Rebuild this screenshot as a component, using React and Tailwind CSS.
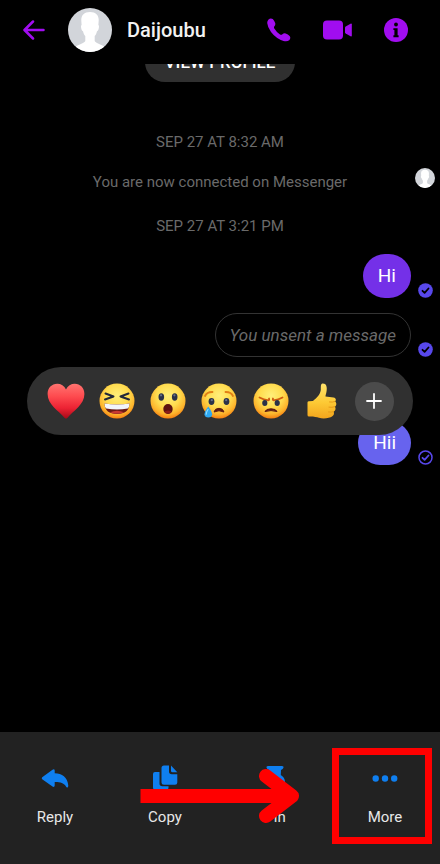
import React from 'react';

const Avatar = ({ className }) => (
  <svg viewBox="0 0 44 44" className={className} role="img" aria-label="Daijoubu">
    <clipPath id="avatar-clip">
      <circle cx="22" cy="22" r="22" />
    </clipPath>
    <g clipPath="url(#avatar-clip)">
      <rect width="44" height="44" fill="#d2d5da" />
      <path
        fill="#fff"
        d="M22 4C16 4 13 7.500 13.300 12.500L13.600 17C12.800 17.300 12.900 19 13.400 21C13.800 22.600 14.300 23 15 23.200C15.500 25.500 16.300 27 17.300 28V33C16.500 35 10 36.500 6.500 39.500V46H37.500V39.500C34 36.500 27.500 35 26.700 33V28C27.700 27 28.500 25.500 29 23.200C29.700 23 30.200 22.600 30.600 21C31.100 19 31.200 17.300 30.400 17L30.700 12.500C31 7.500 28 4 22 4Z"
      />
    </g>
  </svg>
);

const BackIcon = () => (
  <svg viewBox="0 0 22 20" className="w-[22px] h-5" fill="none" stroke="#a10df0" strokeWidth="2.5" strokeLinecap="round" strokeLinejoin="round">
    <path d="M10 1.500L1.500 10L10 18.500M2 10H20.500" />
  </svg>
);

const CallIcon = () => (
  <svg viewBox="0 0 24 24" className="w-6 h-6" fill="#a10df0">
    <path d="M1.300 1.800Q3.500-.5 5.800 1Q7.500 3 8.200 5Q8.700 6.800 7.400 8.300Q6.600 9.400 7.300 10.600Q9.500 14.300 13 16.400Q14.300 17.100 15.400 16.200Q17 14.900 18.700 15.500Q21 16.400 22.600 18Q24.200 20 22.200 22.200Q20.200 24 16.500 23Q9 20.500 4 14Q.5 9 .2 5Q.2 3 1.300 1.800Z" />
  </svg>
);

const VideoIcon = () => (
  <svg viewBox="0 0 29 24" className="w-[29px] h-6" fill="#a10df0">
    <rect x="0" y="2.500" width="20" height="19" rx="4" />
    <path d="M22 9.500Q22 8.800 22.700 8.400L27.500 5.700Q28.800 5.200 28.800 6.300V17.700Q28.800 18.800 27.500 18.300L22.700 15.600Q22 15.200 22 14.500Z" />
  </svg>
);

const InfoIcon = () => (
  <svg viewBox="0 0 24 24" className="w-6 h-6">
    <circle cx="12" cy="12" r="12" fill="#a10df0" />
    <circle cx="12" cy="6.500" r="1.900" fill="#000" />
    <path d="M10 10.200H13.600V17.300H14.600V19.300H9.400V17.300H10.400V12H9.400V10.200Z" fill="#000" />
  </svg>
);

const SeenIcon = ({ filled }) => (
  <svg viewBox="0 0 15 15" className="w-[15px] h-[15px] shrink-0" fill="none" strokeLinecap="round" strokeLinejoin="round">
    {filled ? (
      <circle cx="7.500" cy="7.500" r="7.300" fill="#5848ec" />
    ) : (
      <circle cx="7.500" cy="7.500" r="6.500" stroke="#5848ec" strokeWidth="1.500" />
    )}
    <path d="M4.500 7.800L6.600 9.800L10.500 5.500" stroke={filled ? '#000' : '#5848ec'} strokeWidth="1.800" />
  </svg>
);

const Heart = () => (
  <svg viewBox="0 0 36 36" className="w-9 h-9 overflow-visible">
    <defs>
      <linearGradient id="heart" x1="0" y1="0" x2="0" y2="1">
        <stop offset="0" stopColor="#ff7470" />
        <stop offset=".35" stopColor="#fe4c50" />
        <stop offset=".7" stopColor="#ec2233" />
        <stop offset="1" stopColor="#a50a18" />
      </linearGradient>
    </defs>
    <path
      fill="url(#heart)"
      d="M18 6.500C16.300 2.800 13 .8 9.200 .8C3.800 .8 -.4 5 -.4 11C-.4 21.500 10.500 27.500 16.700 35Q18 36.200 19.300 35C25.500 27.500 36.400 21.500 36.400 11C36.400 5 32.200 .8 26.800 .8C23 .8 19.700 2.800 18 6.500Z"
    />
  </svg>
);

const Face = ({ children }) => (
  <svg viewBox="0 0 36 36" className="w-9 h-9">
    <defs>
      <radialGradient id="face" cx=".5" cy=".35" r=".66">
        <stop offset="0" stopColor="#ffef7a" />
        <stop offset=".5" stopColor="#ffdc4f" />
        <stop offset=".8" stopColor="#fdb42c" />
        <stop offset="1" stopColor="#f5790f" />
      </radialGradient>
    </defs>
    <circle cx="18" cy="18" r="17.500" fill="url(#face)" />
    {children}
  </svg>
);

const Laugh = () => (
  <Face>
    <g fill="none" stroke="#22283a" strokeWidth="2" strokeLinecap="round" strokeLinejoin="round">
      <path d="M6.500 10.500L14.500 13.500L6 16.500" />
      <path d="M29.500 10.500L21.500 13.500L30 16.500" />
    </g>
    <path d="M5.500 20.500Q18 22.500 30.500 20.500Q30 31 18 31Q6 31 5.500 20.500Z" fill="#6b1a16" />
    <path d="M5.500 20.500Q18 22.500 30.500 20.500Q30.300 24.500 28.800 25.500Q18 27.500 7.200 25.500Q5.700 24.500 5.500 20.500Z" fill="#f2f5fb" />
    <path d="M11 29.200Q18 26.200 25 29.200Q18 32.500 11 29.200Z" fill="#c93a32" />
  </Face>
);

const Wow = () => (
  <Face>
    <ellipse cx="11.300" cy="14" rx="2.800" ry="3.700" fill="#2b3248" />
    <ellipse cx="24.700" cy="14" rx="2.800" ry="3.700" fill="#2b3248" />
    <circle cx="11" cy="12.300" r="1.100" fill="#66708c" />
    <circle cx="24.400" cy="12.300" r="1.100" fill="#66708c" />
    <ellipse cx="18" cy="26" rx="4.700" ry="5" fill="#5d1210" />
    <ellipse cx="18" cy="29" rx="3.200" ry="1.500" fill="#8a1d18" />
  </Face>
);

const Sad = () => (
  <Face>
    <path d="M4 13Q6 8.800 11.500 9M24.500 9Q30 8.800 32 13" fill="none" stroke="#e28016" strokeWidth="1.800" strokeLinecap="round" />
    <ellipse cx="10.500" cy="18.500" rx="2.900" ry="3.400" fill="#2b3248" />
    <ellipse cx="25.500" cy="18.500" rx="2.900" ry="3.400" fill="#2b3248" />
    <circle cx="10.800" cy="17.200" r="1.100" fill="#66708c" />
    <circle cx="25.200" cy="17.200" r="1.100" fill="#66708c" />
    <path d="M13 29Q14 25.300 18 25.300Q22 25.300 23 29Q18 26.500 13 29Z" fill="#5d1a12" stroke="#5d1a12" strokeLinejoin="round" />
    <path d="M7.300 23.500Q3.500 28.500 3.500 31.200Q3.700 34.500 7.300 34.500Q11 34.500 11.100 31.200Q11 28.500 7.300 23.500Z" fill="#2ea8f2" />
    <path d="M7 26.500Q5 29.500 5.200 31.200" fill="none" stroke="#8fdcff" strokeWidth="1.200" strokeLinecap="round" />
  </Face>
);

const Angry = () => (
  <Face>
    <path d="M6.500 14.500Q10.500 16.800 15.500 17.300Q16.500 17.200 16 15.500M29.500 14.500Q25.500 16.800 20.500 17.300Q19.500 17.200 20 15.500" fill="none" stroke="#cf5c10" strokeWidth="1.800" strokeLinecap="round" />
    <ellipse cx="11.800" cy="20" rx="2.600" ry="2.900" fill="#2b3248" />
    <ellipse cx="24.200" cy="20" rx="2.600" ry="2.900" fill="#2b3248" />
    <path d="M12 28.500Q13 25.800 18 25.800Q23 25.800 24 28.500Q18 26.700 12 28.500Z" fill="#5d1a12" stroke="#5d1a12" strokeLinejoin="round" />
  </Face>
);

const Like = () => (
  <svg viewBox="0 0 36 36" className="w-9 h-9">
    <defs>
      <linearGradient id="like" x1="0" y1="0" x2="0" y2="1">
        <stop offset="0" stopColor="#ffe36b" />
        <stop offset=".55" stopColor="#fdc934" />
        <stop offset="1" stopColor="#f3a51d" />
      </linearGradient>
    </defs>
    <path
      fill="url(#like)"
      d="M3.500 19.500Q3.500 18.200 5 18.200L9 18C12.500 15 16 12 16.800 7C17 4 16.300 .8 18.600 .5C22.300 .3 23.300 4 22.600 8C22.300 10.500 21.500 12 21.500 13.500C24 14.200 27 13.800 29.500 14.500C32.500 15.300 32.300 17.600 31 18.500C33 19.800 32.600 22.700 30.800 23.700C32.200 25.200 31.500 28 29.600 28.600C30.500 30.700 29.800 32.500 28 33.600C26 35.200 19 36 15 34.800C12.500 34 10 33.400 5 33.500Q3.500 33.500 3.500 32Z"
    />
    <path d="M31 18.500Q28.500 19.500 25.500 19M30.800 23.700Q28 24.700 25 24.200M29.600 28.600Q27.500 29.400 24.500 29" fill="none" stroke="#e79a17" strokeLinecap="round" />
  </svg>
);

const ReplyIcon = () => (
  <svg viewBox="0 0 28 28" className="w-7 h-7" fill="#0f7ff0">
    <path d="M1.200 13.300L11.500 5.700Q13.500 4.500 13.700 6.500V9.300C21 9.500 26.500 13 27.300 21.500Q27.200 24.800 25.300 22.900C23 18.900 19 17.900 13.700 18V21.500Q13.500 23.700 11.500 22.500L1.200 15.300Q.2 14.300 1.200 13.300Z" />
  </svg>
);

const CopyIcon = () => (
  <svg viewBox="0 0 28 28" className="w-7 h-7" fill="#0f7ff0">
    <path d="M4 8H8.500V19.500Q8.500 22.300 11.300 22.300H17.500V23.500Q17.500 26 15 26H4.500Q2 26 2 23.500V10Q2 8 4 8Z" />
    <path d="M13 1.500H18V7.500Q18 10.300 20.800 10.300H26.300V18.500Q26.300 20.800 24 20.800H13Q10.500 20.800 10.500 18.500V4Q10.500 1.500 13 1.500Z" />
    <path d="M20 1.500L26.300 8.300H21.500Q20 8.300 20 6.800Z" />
  </svg>
);

const PinIcon = () => (
  <svg viewBox="0 0 28 28" className="w-7 h-7" fill="#0f7ff0">
    <path d="M7 2H21Q23 2 22.500 3.800Q22 5 20 6L19.800 11Q24 13.500 24 18H15.300V25L14 27L12.700 25V18H4Q4 13.500 8.200 11L8 6Q6 5 5.500 3.800Q5 2 7 2Z" />
  </svg>
);

const MoreIcon = () => (
  <svg viewBox="0 0 28 28" className="w-7 h-7" fill="#0f7ff0">
    <circle cx="4.700" cy="14.500" r="3.200" />
    <circle cx="14" cy="14.500" r="3.200" />
    <circle cx="23.200" cy="14.500" r="3.200" />
  </svg>
);

const reactions = [
  { name: 'Love', Icon: Heart },
  { name: 'Haha', Icon: Laugh },
  { name: 'Wow', Icon: Wow },
  { name: 'Sad', Icon: Sad },
  { name: 'Angry', Icon: Angry },
  { name: 'Like', Icon: Like },
];

const actions = [
  { label: 'Reply', Icon: ReplyIcon },
  { label: 'Copy', Icon: CopyIcon },
  { label: 'Pin', Icon: PinIcon },
  { label: 'More', Icon: MoreIcon },
];

const Header = () => (
  <header className="flex items-center pl-[23px] pr-8 pt-2 pb-3">
    <button aria-label="Back">
      <BackIcon />
    </button>
    <Avatar className="w-11 h-11 ml-[23px]" />
    <h1 className="ml-[15px] text-[20px] leading-6 font-medium text-[#f2f2f2]">Daijoubu</h1>
    <div className="ml-auto flex items-center gap-8">
      <button aria-label="Call">
        <CallIcon />
      </button>
      <button aria-label="Video call">
        <VideoIcon />
      </button>
      <button aria-label="Info">
        <InfoIcon />
      </button>
    </div>
  </header>
);

const ReactionBar = () => (
  <div className="absolute inset-x-[27px] bottom-[30px] h-[68px] rounded-full bg-[#303030] flex items-center justify-between pl-[21px] pr-[19px]">
    {reactions.map(({ name, Icon }) => (
      <button key={name} aria-label={name}>
        <Icon />
      </button>
    ))}
    <button aria-label="More reactions" className="w-[39px] h-[39px] rounded-full bg-[#4b4b4b] flex items-center justify-center">
      <svg viewBox="0 0 16 16" className="w-4 h-4" stroke="#fff" strokeWidth="1.800" strokeLinecap="round">
        <path d="M8 1V15M1 8H15" />
      </svg>
    </button>
  </div>
);

const App = () => {
  return (
    <div className="min-h-screen flex flex-col bg-black font-['Roboto',sans-serif]">
      <Header />

      <main className="flex-1 overflow-hidden text-[#6a6a6a] text-[15px] leading-5">
        <div className="flex justify-center">
          <button className="-mt-[22px] h-10 px-5 rounded-full bg-[#303030] text-white text-[17px] font-medium">
            VIEW PROFILE
          </button>
        </div>

        <p className="mt-[50px] text-center">SEP 27 AT 8:32 AM</p>
        <div className="mt-4 h-6 px-[5px] flex">
          <p className="flex-1 self-end pl-5 text-center">You are now connected on Messenger</p>
          <Avatar className="w-5 h-5" />
        </div>
        <p className="mt-6 text-center">SEP 27 AT 3:21 PM</p>

        <div className="mt-[18px] pr-[7px] flex items-end justify-end gap-[7px]">
          <p className="h-11 px-[15px] flex items-center rounded-full bg-[#7430e8] text-white text-[19px]">Hi</p>
          <SeenIcon filled />
        </div>
        <div className="mt-[15px] pr-[7px] flex items-end justify-end gap-[7px]">
          <p className="h-11 px-[14px] flex items-center rounded-full border border-[#333] italic text-[17px]">
            You unsent a message
          </p>
          <SeenIcon filled />
        </div>
        <div className="relative mt-16 pr-[7px] flex items-end justify-end gap-[7px]">
          <p className="h-11 px-[15px] flex items-center rounded-full bg-[#6763ee] text-white text-[19px]">Hii</p>
          <SeenIcon />
          <ReactionBar />
        </div>
      </main>

      <footer className="relative bg-[#222]">
        <nav className="grid grid-cols-4 pt-8 pb-[37px]">
          {actions.map(({ label, Icon }) => (
            <button key={label} className="flex flex-col items-center gap-[15px] text-[15px] leading-5 text-[#e8e8e8]">
              <Icon />
              {label}
            </button>
          ))}
        </nav>

        {/* callout pointing at the More action */}
        <svg viewBox="0 0 160 56" className="absolute left-[140px] top-9 w-40 h-14 pointer-events-none" fill="none" stroke="#f00">
          <path d="M.5 28H150" strokeWidth="14" />
          <path d="M126 8L152 28L126 48" strokeWidth="14" strokeLinecap="round" strokeLinejoin="round" />
        </svg>
        <div className="absolute right-2 top-4 w-[100px] h-24 border-[7px] border-[#f00] pointer-events-none" />
      </footer>
    </div>
  );
};

export default App;
